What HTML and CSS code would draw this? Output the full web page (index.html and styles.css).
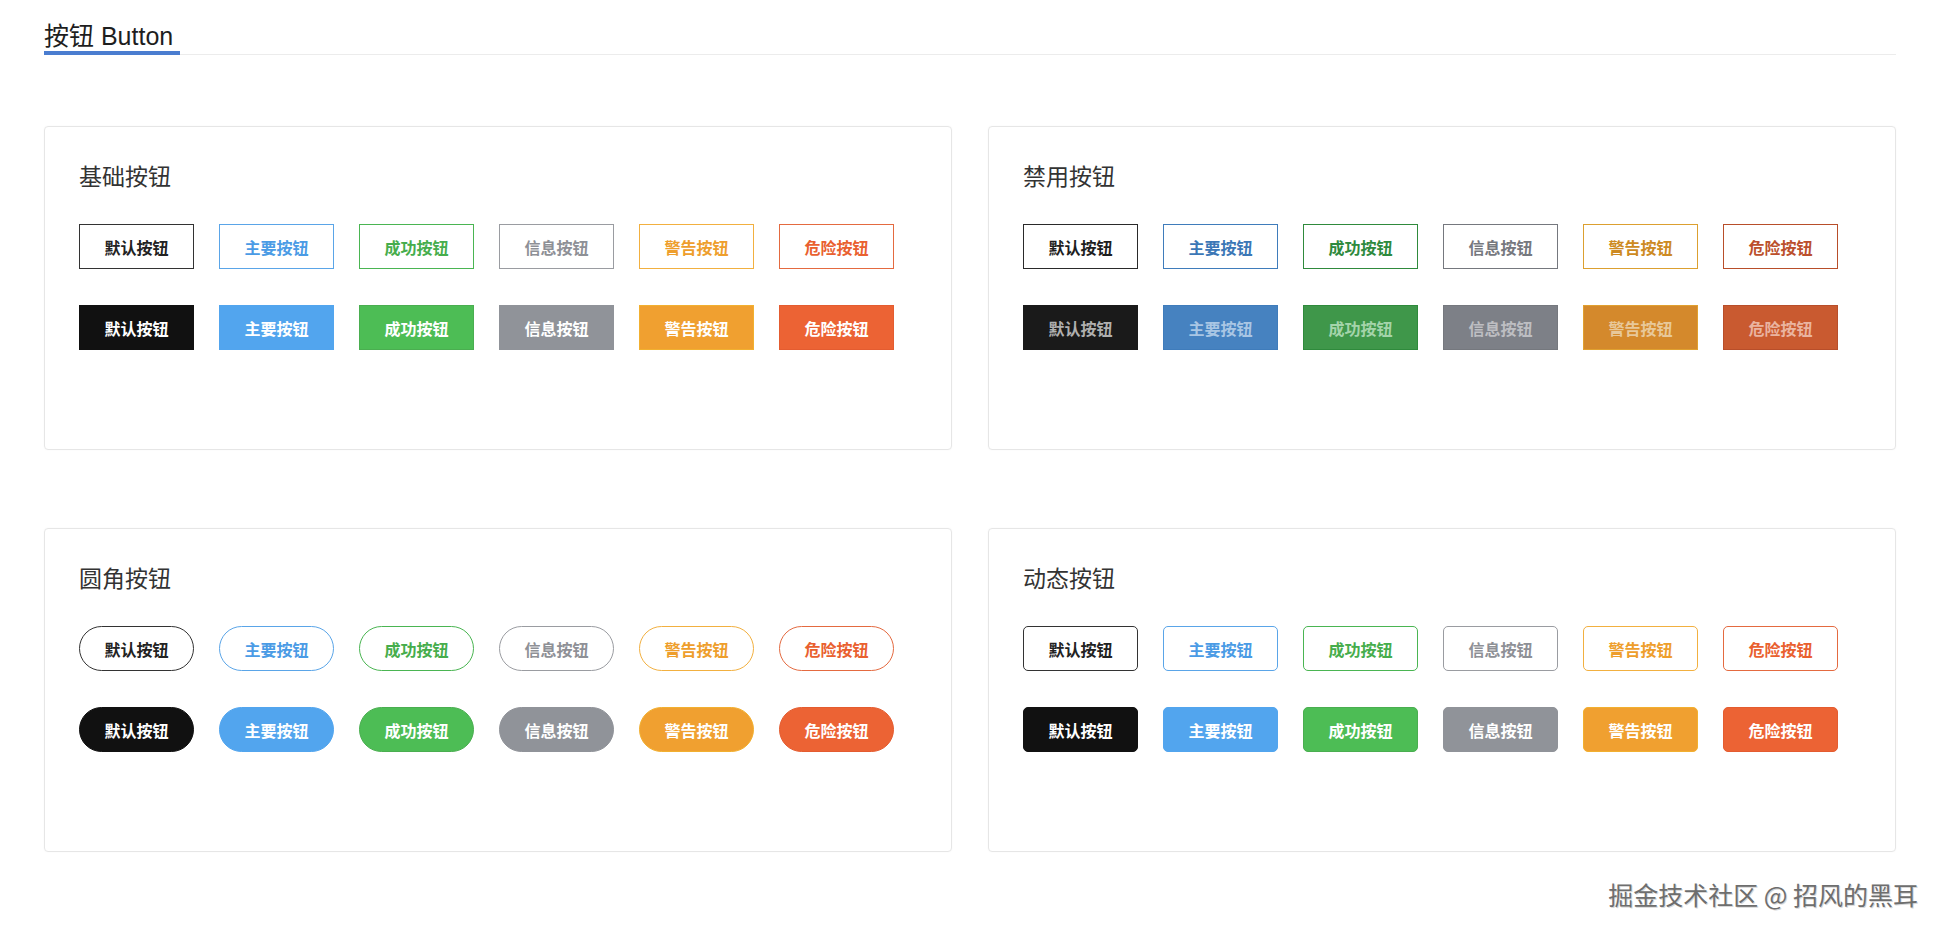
FILE: index.html
```html
<!DOCTYPE html>
<html lang="zh-CN">
<head>
<meta charset="utf-8">
<title>按钮 Button</title>
<link rel="stylesheet" href="styles.css">
</head>
<body>
<div class="page">
  <div class="header"><span class="header-title">按钮 Button</span></div>
  <div class="grid">
    <section class="card">
      <h3 class="card-title">基础按钮</h3>
      <div class="row">
        <button class="btn plain default">默认按钮</button>
        <button class="btn plain primary">主要按钮</button>
        <button class="btn plain success">成功按钮</button>
        <button class="btn plain info">信息按钮</button>
        <button class="btn plain warning">警告按钮</button>
        <button class="btn plain danger">危险按钮</button>
      </div>
      <div class="row">
        <button class="btn default">默认按钮</button>
        <button class="btn primary">主要按钮</button>
        <button class="btn success">成功按钮</button>
        <button class="btn info">信息按钮</button>
        <button class="btn warning">警告按钮</button>
        <button class="btn danger">危险按钮</button>
      </div>
    </section>
    <section class="card">
      <h3 class="card-title">禁用按钮</h3>
      <div class="row">
        <button class="btn plain default disabled">默认按钮</button>
        <button class="btn plain primary disabled">主要按钮</button>
        <button class="btn plain success disabled">成功按钮</button>
        <button class="btn plain info disabled">信息按钮</button>
        <button class="btn plain warning disabled">警告按钮</button>
        <button class="btn plain danger disabled">危险按钮</button>
      </div>
      <div class="row">
        <button class="btn default disabled">默认按钮</button>
        <button class="btn primary disabled">主要按钮</button>
        <button class="btn success disabled">成功按钮</button>
        <button class="btn info disabled">信息按钮</button>
        <button class="btn warning disabled">警告按钮</button>
        <button class="btn danger disabled">危险按钮</button>
      </div>
    </section>
    <section class="card">
      <h3 class="card-title">圆角按钮</h3>
      <div class="row">
        <button class="btn plain round default">默认按钮</button>
        <button class="btn plain round primary">主要按钮</button>
        <button class="btn plain round success">成功按钮</button>
        <button class="btn plain round info">信息按钮</button>
        <button class="btn plain round warning">警告按钮</button>
        <button class="btn plain round danger">危险按钮</button>
      </div>
      <div class="row">
        <button class="btn round default">默认按钮</button>
        <button class="btn round primary">主要按钮</button>
        <button class="btn round success">成功按钮</button>
        <button class="btn round info">信息按钮</button>
        <button class="btn round warning">警告按钮</button>
        <button class="btn round danger">危险按钮</button>
      </div>
    </section>
    <section class="card">
      <h3 class="card-title">动态按钮</h3>
      <div class="row">
        <button class="btn plain radius default">默认按钮</button>
        <button class="btn plain radius primary">主要按钮</button>
        <button class="btn plain radius success">成功按钮</button>
        <button class="btn plain radius info">信息按钮</button>
        <button class="btn plain radius warning">警告按钮</button>
        <button class="btn plain radius danger">危险按钮</button>
      </div>
      <div class="row">
        <button class="btn radius default">默认按钮</button>
        <button class="btn radius primary">主要按钮</button>
        <button class="btn radius success">成功按钮</button>
        <button class="btn radius info">信息按钮</button>
        <button class="btn radius warning">警告按钮</button>
        <button class="btn radius danger">危险按钮</button>
      </div>
    </section>
  </div>
  <div class="watermark">掘金技术社区 @ 招风的黑耳</div>
</div>
</body>
</html>
```

FILE: styles.css
```css
* { box-sizing: border-box; }
html, body {
  margin: 0;
  padding: 0;
  background: #fff;
}
body {
  font-family: "Liberation Sans", "Noto Sans CJK SC", sans-serif;
  color: #333;
}
.page {
  position: relative;
  width: 1944px;
  height: 936px;
  padding: 21px 48px 0 44px;
}
.header {
  border-bottom: 1px solid #ececec;
}
.header-title {
  display: inline-block;
  font-size: 25px;
  line-height: 30px;
  color: #1e1e1e;
  padding-right: 7px;
  border-bottom: 4px solid #4a7dd0;
  margin-bottom: -1px;
}
.grid {
  margin-top: 71px;
  display: grid;
  grid-template-columns: 1fr 1fr;
  column-gap: 36px;
  row-gap: 78px;
}
.card {
  height: 324px;
  border: 1px solid #e6e6e6;
  border-radius: 4px;
  padding: 35px 34px 0;
  box-shadow: 0 0 2px rgba(0,0,0,0.04);
}
.card-title {
  margin: 0 0 32px;
  font-size: 23px;
  line-height: 30px;
  font-weight: normal;
  color: #333;
}
.row {
  display: flex;
  gap: 25px;
}
.row + .row {
  margin-top: 36px;
}
.btn {
  width: 115px;
  height: 45px;
  padding: 0;
  margin: 0;
  border: 1px solid transparent;
  font-family: "Liberation Sans", "Noto Sans CJK SC", sans-serif;
  font-size: 16px;
  font-weight: 700;
  color: #fff;
  background: #fff;
  cursor: pointer;
}
.btn.round { border-radius: 23px; }
.btn.radius { border-radius: 5px; }

/* filled */
.btn.default { background: #111; border-color: #111; }
.btn.primary { background: #52a5ee; border-color: #52a5ee; }
.btn.success { background: #4dbd55; border-color: #4aae50; }
.btn.info { background: #909399; border-color: #909399; }
.btn.warning { background: #f0a030; border-color: #f2b030; }
.btn.danger { background: #ec6334; border-color: #e45c30; }

/* plain */
.btn.plain { background: #fff; }
.btn.plain.default { color: #222; border-color: #333; }
.btn.plain.primary { color: #4a9be5; border-color: #5aa5e8; }
.btn.plain.success { color: #46ad4c; border-color: #4ab552; }
.btn.plain.info { color: #8e9096; border-color: #9a9ca1; }
.btn.plain.warning { color: #ee9e2c; border-color: #f2b040; }
.btn.plain.danger { color: #e9602f; border-color: #e46a40; }

/* disabled */
.btn.disabled { cursor: not-allowed; }
.btn.disabled.default { background: #1a1a1a; border-color: #1a1a1a; color: #b0b0b0; }
.btn.disabled.primary { background: #4682c0; border-color: #3f7cbb; color: #a9c6e4; }
.btn.disabled.success { background: #3f974a; border-color: #2f8a3c; color: #a4d4aa; }
.btn.disabled.info { background: #7d8087; border-color: #75787e; color: #bdbec2; }
.btn.disabled.warning { background: #d4892c; border-color: #e0a030; color: #e8c89a; }
.btn.disabled.danger { background: #c95a30; border-color: #b84e2a; color: #eab4a0; }

.btn.plain.disabled { background: #fff; }
.btn.plain.disabled.default { color: #1e1e1e; border-color: #2a2a2a; }
.btn.plain.disabled.primary { color: #3b77b6; border-color: #3f7cbb; }
.btn.plain.disabled.success { color: #2e8a3d; border-color: #2f8a3c; }
.btn.plain.disabled.info { color: #76787e; border-color: #75787e; }
.btn.plain.disabled.warning { color: #cd8a22; border-color: #dca030; }
.btn.plain.disabled.danger { color: #bb4f2c; border-color: #b84e2a; }

.watermark {
  position: absolute;
  right: 26px;
  top: 876px;
  font-family: "Noto Sans CJK SC", sans-serif;
  font-size: 25px;
  line-height: 36px;
  color: #6e6e6e;
  text-shadow: 1px 1px 0 #d8d8d8, -1px -1px 0 #fff;
  letter-spacing: 0;
}
```
